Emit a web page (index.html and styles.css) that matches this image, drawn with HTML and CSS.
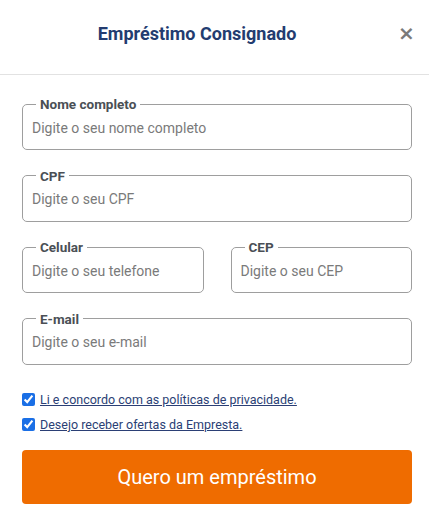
FILE: index.html
```html
<!DOCTYPE html>
<html lang="pt-BR">
<head>
<meta charset="utf-8">
<title>Empréstimo Consignado</title>
<link rel="stylesheet" href="styles.css">
</head>
<body>
<div class="modal">
  <header class="modal-header">
    <h1 class="modal-title">Empréstimo Consignado</h1>
    <button class="close-btn" type="button" aria-label="Fechar">×</button>
  </header>
  <form class="form">
    <fieldset class="field">
      <legend class="field-label">Nome completo</legend>
      <input class="field-input" type="text" placeholder="Digite o seu nome completo">
    </fieldset>
    <fieldset class="field">
      <legend class="field-label">CPF</legend>
      <input class="field-input" type="text" placeholder="Digite o seu CPF">
    </fieldset>
    <div class="row">
      <fieldset class="field">
        <legend class="field-label">Celular</legend>
        <input class="field-input" type="text" placeholder="Digite o seu telefone">
      </fieldset>
      <fieldset class="field">
        <legend class="field-label">CEP</legend>
        <input class="field-input" type="text" placeholder="Digite o seu CEP">
      </fieldset>
    </div>
    <fieldset class="field">
      <legend class="field-label">E-mail</legend>
      <input class="field-input" type="text" placeholder="Digite o seu e-mail">
    </fieldset>
    <div class="checks">
      <label class="check"><input type="checkbox" checked><a href="#" class="check-link">Li e concordo com as políticas de privacidade.</a></label>
      <label class="check"><input type="checkbox" checked><a href="#" class="check-link">Desejo receber ofertas da Empresta.</a></label>
    </div>
    <button class="submit" type="button">Quero um empréstimo</button>
  </form>
</div>
</body>
</html>
```
FILE: styles.css
```css
* { box-sizing: border-box; }
html, body { margin: 0; padding: 0; background: #fff; }
body { font-family: Roboto, "Noto Sans", "Liberation Sans", sans-serif; }

.modal { width: 429px; }

.modal-header {
  height: 75px;
  display: flex;
  align-items: center;
  padding: 0 10px 0 0;
  border-bottom: 1px solid #e2e2e2;
}
.modal-title {
  flex: 1;
  margin: 0 0 8px 0;
  text-align: center;
  font-size: 18px;
  font-weight: 700;
  color: #233c70;
}
.close-btn {
  width: 25px;
  margin-bottom: 8px;
  border: 0;
  background: none;
  padding: 0;
  font-family: "DejaVu Sans", sans-serif;
  font-size: 20px;
  font-weight: 700;
  line-height: 1;
  color: #7a7a7a;
}

.form {
  padding: 21px 17px 0 22px;
  display: flex;
  flex-direction: column;
  gap: 17.5px;
}

.field {
  margin: 0;
  padding: 0 9px 5px;
  border: 1px solid #9e9e9e;
  border-radius: 5px;
  min-width: 0;
}
.field-label {
  margin-left: 4px;
  padding: 0 4px;
  font-size: 13.5px;
  line-height: 16px;
  font-weight: 700;
  color: #4a4f55;
}
.field-input {
  display: block;
  width: 100%;
  height: 32px;
  border: 0;
  padding: 0 0 1px;
  outline: none;
  font-family: inherit;
  font-size: 14px;
  color: #333;
  background: transparent;
}
.field-input::placeholder { color: #7a7a7a; }

.row {
  display: grid;
  grid-template-columns: 1fr 1fr;
  gap: 27px;
}

.checks {
  display: flex;
  flex-direction: column;
  gap: 9px;
  padding-top: 9px;
}
.check {
  display: flex;
  align-items: center;
  gap: 5px;
  height: 16px;
}
.check input {
  margin: 0;
  width: 13px;
  height: 13px;
  accent-color: #1a6fe6;
}
.check-link {
  font-size: 12.5px;
  color: #2b3f75;
  text-decoration: underline;
}

.submit {
  margin-top: 0;
  height: 54px;
  border: 0;
  border-radius: 4px;
  background: #ef6c00;
  color: #fff;
  font-family: inherit;
  font-size: 20px;
}
```
